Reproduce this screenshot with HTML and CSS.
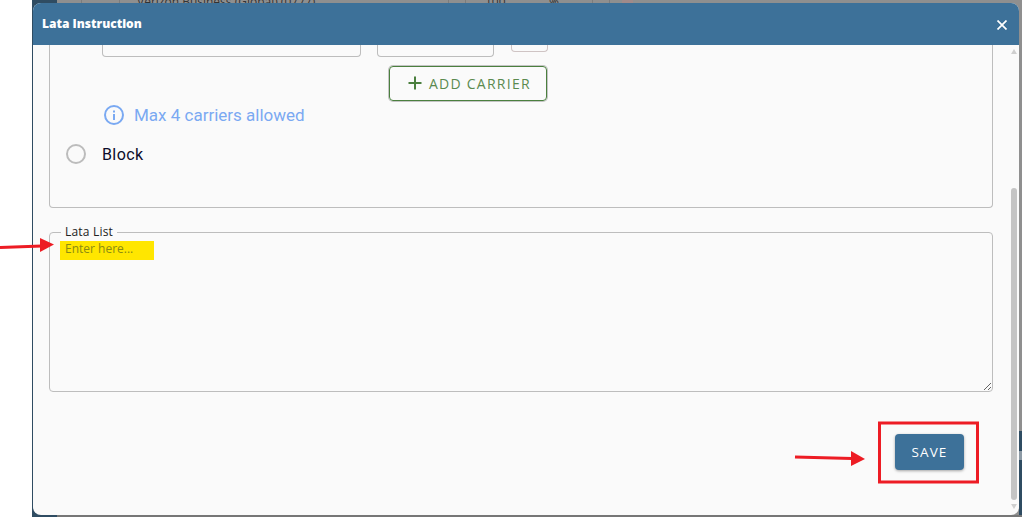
FILE: index.html
```html
<!DOCTYPE html>
<html lang="en">
<head>
  <meta charset="UTF-8" />
  <title>Lata Instruction</title>
  <link rel="stylesheet" href="styles.css">
</head>
<body>
  <div class="page">

    <!-- App behind the dialog -->
    <div class="app">
      <div class="app-side"></div>
      <div class="app-main">
        <div class="app-row">
          <span class="app-cell cell-a"></span>
          <span class="app-cell cell-b"></span>
          <span class="app-cell cell-name">Verizon Business (Global) (0777)</span>
          <span class="app-cell cell-c"></span>
          <span class="app-cell cell-pct">100</span>
          <span class="app-cell cell-sign">%</span>
          <span class="app-cell cell-d"></span>
          <span class="app-chip"></span>
        </div>
        <div class="app-tab"></div>
      </div>
    </div>

    <!-- Dialog -->
    <div class="modal">
      <div class="modal-header">
        <h3>Lata Instruction</h3>
        <svg class="close" width="10" height="10" viewBox="0 0 10 10">
          <path d="M0.5 0.5L9.5 9.5M9.5 0.5L0.5 9.5" stroke="#fff" stroke-width="1.7" fill="none"/>
        </svg>
      </div>

      <div class="modal-body">
        <div class="content">

          <div class="carrier-panel">
            <div class="input-row">
              <div class="cut-input input-name"></div>
              <div class="cut-input input-pct"></div>
              <div class="cut-input input-del"></div>
            </div>
            <button class="add-btn">
              <svg width="14" height="14" viewBox="0 0 14 14">
                <path d="M7 0.5V13.5M0.5 7H13.5" stroke="#4a7f3e" stroke-width="2" fill="none"/>
              </svg>
              ADD CARRIER
            </button>
            <div class="info-row">
              <svg width="20" height="20" viewBox="0 0 20 20">
                <circle cx="10" cy="10" r="9" stroke="#7aa9f2" stroke-width="2" fill="none"/>
                <rect x="9" y="9" width="2" height="6" fill="#7aa9f2"/>
                <rect x="9" y="5.5" width="2" height="2" fill="#7aa9f2"/>
              </svg>
              <span>Max 4 carriers allowed</span>
            </div>
            <label class="radio-row">
              <span class="radio"></span>
              <span class="radio-label">Block</span>
            </label>
          </div>

          <fieldset class="lata-list">
            <legend>Lata List</legend>
            <div class="highlight"></div>
            <textarea placeholder="Enter here..."></textarea>
          </fieldset>

          <div class="actions">
            <button class="save-btn">SAVE</button>
          </div>
        </div>

        <div class="scrollbar">
          <span class="arrow-up"></span>
          <div class="thumb"></div>
          <span class="arrow-down"></span>
        </div>
      </div>
    </div>

    <!-- Red markup on top of the screenshot -->
    <svg class="markup" width="1022" height="517" viewBox="0 0 1022 517">
      <path d="M0 247.5L42 246" stroke="#ed1c24" stroke-width="3" fill="none"/>
      <path d="M40 238L54 244.5L40 252Z" fill="#ed1c24"/>
      <path d="M795 457L852 458.5" stroke="#ed1c24" stroke-width="3" fill="none"/>
      <path d="M851 451L865 459L851 466Z" fill="#ed1c24"/>
      <rect x="879.5" y="423" width="98" height="59" stroke="#ed1c24" stroke-width="3" fill="none"/>
    </svg>
  </div>
</body>
</html>
```

FILE: styles.css
```css
:root {
  --header-color: #3d7199;
  --panel-bg: #fafafa;
  --line: #bdbdbd;
  --green: #4a7f3e;
  --info: #7aa9f2;
}

* {
  box-sizing: border-box;
}

body {
  margin: 0;
  background-color: #fff;
}

.page {
  position: relative;
  width: 1022px;
  height: 517px;
  overflow: hidden;
}

/* App behind the dialog */
.app {
  display: flex;
  height: 100%;
  margin-left: 32px;
}

.app-side {
  width: 25px;
  background-color: #2f4c62;
}

.app-main {
  flex: 1;
  display: flex;
  flex-direction: column;
  background-color: #8f8f8f;
  border-bottom: 2px solid #767676;
}

.app-row {
  display: flex;
  height: 3px;
  overflow: hidden;
  font-family: 'Open Sans', sans-serif;
  font-size: 12px;
  line-height: 3px;
  color: #333;
}

.app-cell {
  display: block;
  border-right: 1px solid #7c7c7c;
  white-space: nowrap;
}

.cell-a { width: 25px; }
.cell-b { width: 38px; }
.cell-name { width: 329px; padding-left: 17px; }
.cell-c { width: 17px; }
.cell-pct { width: 83px; padding-left: 19px; border-right: 0; }
.cell-sign { width: 44px; border-right: 1px solid #7c7c7c; }
.cell-d { width: 17px; }

.app-chip {
  width: 11px;
  height: 3px;
  margin-left: 12px;
  background-color: #a08a8a;
}

.app-tab {
  align-self: flex-end;
  width: 3px;
  height: 84px;
  margin-top: auto;
  background: linear-gradient(#2f4c62 20px, #8d9aa5 20px, #8d9aa5 29px, #2f4c62 29px);
}

/* Dialog */
.modal {
  position: absolute;
  left: 33px;
  top: 3px;
  width: 986px;
  height: 512px;
  display: flex;
  flex-direction: column;
  background-color: var(--panel-bg);
  border-radius: 8px;
  overflow: hidden;
}

.modal-header {
  flex: 0 0 42px;
  display: flex;
  align-items: center;
  justify-content: space-between;
  padding: 0 12px 0 9px;
  background-color: var(--header-color);
}

.modal-header h3 {
  margin: 0 0 2px;
  font-family: 'Open Sans', sans-serif;
  font-size: 12px;
  font-weight: 800;
  color: #fff;
}

.close {
  margin-top: 2px;
}

.modal-body {
  flex: 1;
  display: flex;
  min-height: 0;
}

.content {
  flex: 1;
  padding-left: 16px;
  padding-right: 9px;
}

.carrier-panel {
  height: 163px;
  border: 1px solid var(--line);
  border-top: 0;
  border-radius: 0 0 4px 4px;
}

.input-row {
  display: flex;
  align-items: flex-start;
  height: 12px;
  padding-left: 52px;
}

.cut-input {
  border: 1px solid var(--line);
  border-top: 0;
  border-radius: 0 0 4px 4px;
}

.input-name { width: 259px; height: 12px; }
.input-pct { width: 117px; height: 12px; margin-left: 16px; }
.input-del { width: 37px; height: 7px; margin-left: 17px; border-color: #cfc4c4; }

.add-btn {
  display: flex;
  align-items: center;
  justify-content: flex-start;
  gap: 7px;
  width: 158px;
  height: 35px;
  margin: 9px 0 0 339px;
  padding: 0 0 1px 18px;
  font-family: 'Open Sans', sans-serif;
  font-size: 14px;
  letter-spacing: 1.25px;
  color: #5b8a4f;
  background: none;
  border: 1px solid var(--green);
  border-radius: 4px;
  box-shadow: 0 0 0 1px #c4c4c4;
}

.info-row {
  display: flex;
  align-items: center;
  gap: 10px;
  height: 20px;
  margin: 4px 0 0 54px;
  font-family: Roboto, sans-serif;
  font-size: 17px;
  color: var(--info);
}

.radio-row {
  display: flex;
  align-items: center;
  gap: 16px;
  margin: 18px 0 0 16px;
  font-family: Roboto, sans-serif;
  font-size: 16px;
  letter-spacing: 0.4px;
  color: #0c0c2a;
}

.radio {
  width: 20px;
  height: 20px;
  border: 2px solid #bcbcbc;
  border-radius: 50%;
}

.radio-label {
  margin-top: 2px;
}

.lata-list {
  position: relative;
  height: 168px;
  margin: 16px 0 0;
  padding: 0;
  border: 1px solid var(--line);
  border-radius: 4px;
}

.lata-list legend {
  margin-left: 11px;
  padding: 0 4px;
  font-family: 'Open Sans', sans-serif;
  font-size: 12px;
  line-height: 16px;
  letter-spacing: 0.2px;
  color: #222;
}

.highlight {
  position: absolute;
  left: 10px;
  top: 1px;
  width: 94px;
  height: 19px;
  background-color: #ffe600;
}

.lata-list textarea {
  position: relative;
  display: block;
  width: 100%;
  height: 151px;
  padding: 1px 15px 0;
  font-family: 'Open Sans', sans-serif;
  font-size: 12px;
  line-height: 16px;
  background: transparent;
  border: 0;
  outline: 0;
}

.lata-list textarea::placeholder {
  color: #8b8b12;
  opacity: 1;
}

.actions {
  display: flex;
  justify-content: flex-end;
  margin-top: 42px;
  padding-right: 29px;
}

.save-btn {
  width: 69px;
  height: 36px;
  padding: 0;
  font-family: 'Open Sans', sans-serif;
  font-size: 13.5px;
  font-weight: 500;
  letter-spacing: 1.1px;
  color: #fff;
  background-color: var(--header-color);
  border: 0;
  border-radius: 4px;
  box-shadow: 0 1px 3px rgba(0, 0, 0, 0.35);
}

.scrollbar {
  flex: 0 0 17px;
  display: flex;
  flex-direction: column;
  align-items: center;
  padding: 4px 2px 5px 9px;
}

.arrow-up,
.arrow-down {
  width: 0;
  height: 0;
  border-left: 3px solid transparent;
  border-right: 3px solid transparent;
}

.arrow-up {
  border-bottom: 5px solid #cfcfcf;
}

.arrow-down {
  margin-top: 4px;
  border-top: 5px solid #cfcfcf;
}

.thumb {
  width: 6px;
  height: 312px;
  margin-top: 134px;
  background-color: #c4c4c4;
  border-radius: 3px;
}

.markup {
  position: absolute;
  left: 0;
  top: 0;
  pointer-events: none;
}
```
